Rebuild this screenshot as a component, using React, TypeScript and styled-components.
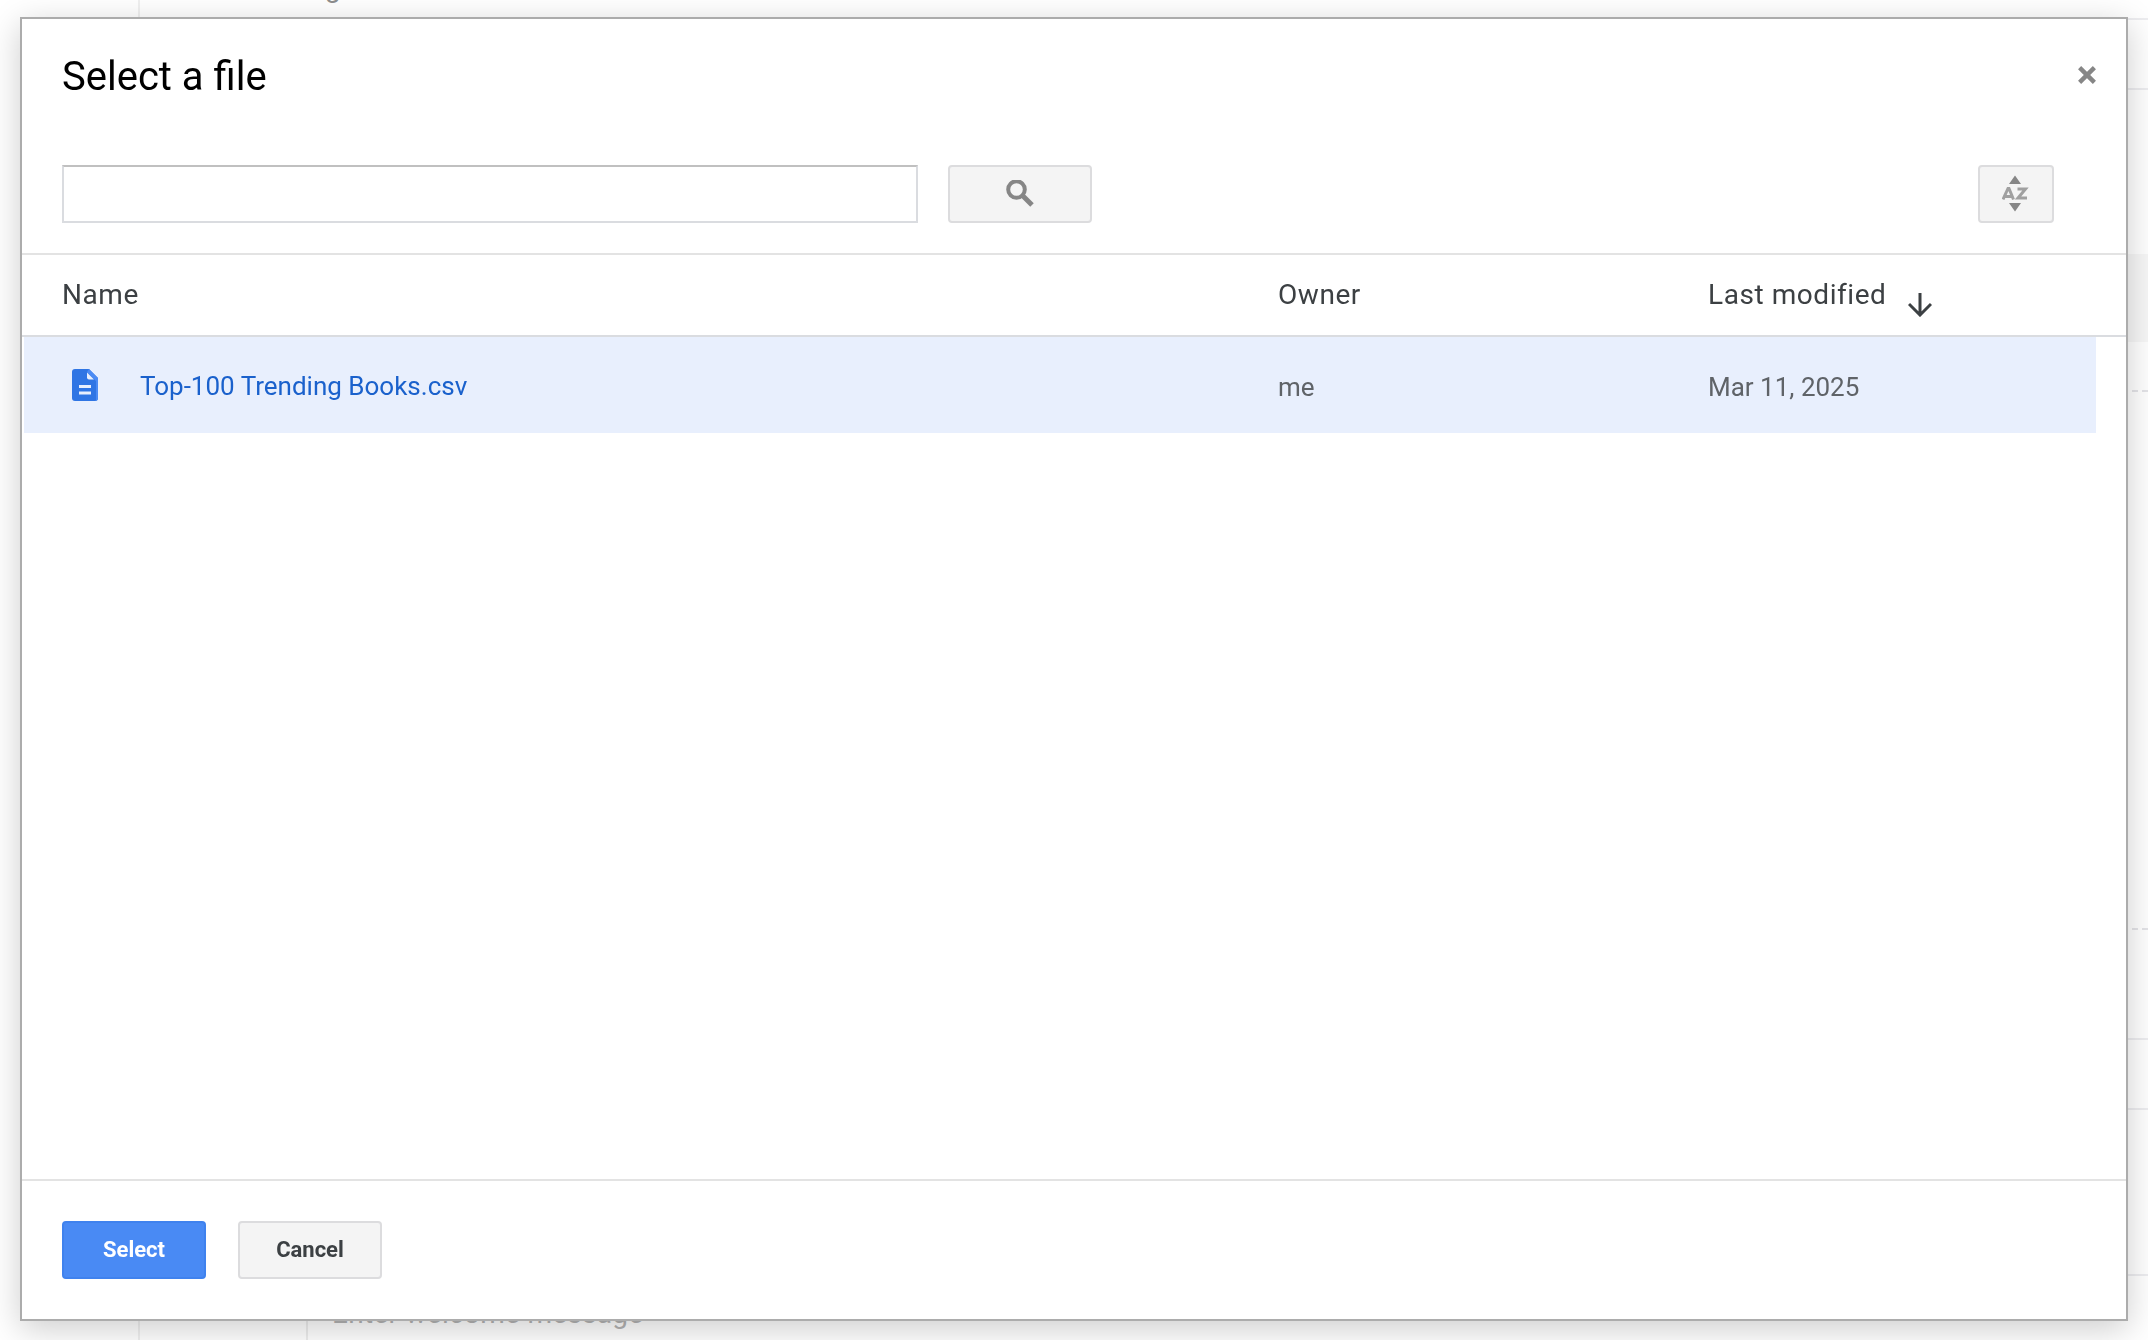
import React from "react";
import styled, { createGlobalStyle } from "styled-components";

const GlobalStyle = createGlobalStyle`
  *, *::before, *::after { box-sizing: border-box; }
  html, body, #root { height: 100%; }
  body {
    margin: 0;
    overflow: hidden;
    background: #fff;
    color: #3c4043;
    font-family: Roboto, "Liberation Sans", sans-serif;
  }
`;

const Page = styled.div`
  display: grid;
  grid-template-columns: 140px 1fr;
  height: 100%;
  overflow: hidden;
  color: #8e8e8e;
  font-size: 28px;
  line-height: 32px;
`;

const Rail = styled.div`
  border-right: 2px solid #f0f0f0;
`;

const Sheet = styled.div`
  display: flex;
  flex-direction: column;
`;

const Band = styled.div<{ $height: number; $line?: "solid" | "dashed"; $shade?: boolean }>`
  flex: none;
  height: ${(p) => p.$height}px;
  border-bottom: ${(p) => (p.$line ? `2px ${p.$line} ${p.$line === "dashed" ? "#e4e4e8" : "#ededf0"}` : "none")};
  background: ${(p) => (p.$shade ? "#f7f7f7" : "transparent")};
`;

const Heading = styled.div`
  margin-top: -28px;
  padding-left: 185px;
`;

const MessageRow = styled.div`
  flex: 1;
  display: flex;
  padding-left: 166px;
`;

const MessageField = styled.div`
  flex: 1;
  padding: 22px 0 0 24px;
  border-left: 2px solid #ededed;
  color: #b4b4b4;
  letter-spacing: 0.01em;
  white-space: nowrap;
`;

const Dialog = styled.div`
  position: fixed;
  inset: 17px 20px 19px;
  display: flex;
  flex-direction: column;
  background: #fff;
  border: 2px solid #acacac;
  box-shadow: 0 8px 32px rgba(0, 0, 0, 0.2);
`;

const Header = styled.header`
  display: flex;
  justify-content: space-between;
  align-items: flex-start;
  height: 114px;
  padding: 34px 20px 0 40px;
`;

const Title = styled.h1`
  margin: 0;
  color: #000;
  font-size: 40px;
  font-weight: 400;
  line-height: 48px;
`;

const CloseButton = styled.button`
  display: grid;
  place-items: center;
  width: 38px;
  height: 44px;
  padding: 0;
  border: 0;
  background: none;
  color: #868686;
`;

const Toolbar = styled.form`
  display: flex;
  align-items: center;
  gap: 30px;
  padding: 32px 72px 30px 40px;
  border-bottom: 2px solid #e3e3e3;
`;

const SearchInput = styled.input`
  flex: 0 1 856px;
  min-width: 0;
  height: 58px;
  padding: 0 16px;
  border: 2px solid #dadce0;
  border-top-color: #c0c0c0;
  font: 26px Roboto, "Liberation Sans", sans-serif;
  outline: none;
`;

const Button = styled.button<{ $primary?: boolean; $compact?: boolean }>`
  display: flex;
  justify-content: center;
  align-items: center;
  width: ${(p) => (p.$compact ? 76 : 144)}px;
  height: 58px;
  margin-left: ${(p) => (p.$compact ? "auto" : "0")};
  padding: 0;
  border: 2px solid ${(p) => (p.$primary ? "#3f82ee" : "#dcdcde")};
  border-radius: 4px;
  background: ${(p) => (p.$primary ? "#498af4" : "#f4f4f4")};
  color: ${(p) => (p.$primary ? "#fff" : "#3c4043")};
  font: 700 22px/26px Roboto, "Liberation Sans", sans-serif;
`;

const FileArea = styled.main`
  flex: 1;
  min-height: 0;
  overflow: hidden;
`;

const FileTable = styled.table`
  width: 100%;
  table-layout: fixed;
  border-collapse: separate;
  border-spacing: 0;
  text-align: left;
`;

const Column = styled.col<{ $width?: number }>`
  width: ${(p) => (p.$width ? `${p.$width}px` : "auto")};
`;

const HeadCell = styled.th<{ $first?: boolean }>`
  height: 82px;
  padding: 0 0 0 ${(p) => (p.$first ? 40 : 0)}px;
  border-bottom: 2px solid #dadce0;
  font-size: 28px;
  font-weight: 400;
  line-height: 32px;
  letter-spacing: 0.02em;
  white-space: nowrap;
`;

const SortLabel = styled.span`
  display: flex;
  align-items: flex-end;
  gap: 22px;
  height: 32px;

  svg {
    margin-bottom: -6px;
  }
`;

const Cell = styled.td<{ $first?: boolean }>`
  height: 96px;
  padding: ${(p) => (p.$first ? 2 : 4)}px 0 0;
  border-left: ${(p) => (p.$first ? "2px solid #fff" : "0")};
  background: #e8effd;
  color: #5f6368;
  font-size: 26px;
  line-height: 32px;
  white-space: nowrap;
`;

const FileName = styled.div`
  display: flex;
  align-items: center;
  gap: 42px;
  padding-left: 48px;
  color: #1a61cc;

  svg {
    margin-bottom: 2px;
  }
`;

const Footer = styled.footer`
  display: flex;
  gap: 32px;
  padding: 40px;
  border-top: 2px solid #e3e3e3;
`;

const CloseIcon = () => (
  <svg width="18" height="18" viewBox="0 0 18 18" aria-hidden="true">
    <path d="M1.6 1.6l14.8 14.8M16.4 1.6L1.6 16.4" stroke="currentColor" strokeWidth="4.4" />
  </svg>
);

const SearchIcon = () => (
  <svg width="28" height="28" viewBox="0 1 28 28" fill="none" stroke="#868686" aria-hidden="true">
    <circle cx="10.5" cy="10.5" r="8.3" strokeWidth="4" />
    <path d="M17 17l9 9" strokeWidth="5" />
  </svg>
);

const SortIcon = () => (
  <svg width="28" height="38" viewBox="0 0 28 38" aria-hidden="true">
    <path d="M13 .5l6 8.5H7zM13 36.5l6-8.5H7z" fill="#868686" />
    <g fill="none" stroke="#a0a0a0" strokeWidth="3">
      <path d="M1 24.5L6 13.5H7L11.5 24.5M3 21.5h7" />
      <path d="M15.5 14h8L16 23h9" />
    </g>
  </svg>
);

const ArrowIcon = () => (
  <svg width="24" height="24" viewBox="0 0 24 24" fill="none" stroke="#3c4043" strokeWidth="3" aria-hidden="true">
    <path d="M12 0v22M1 11l11 11 11-11" />
  </svg>
);

const DocumentIcon = () => (
  <svg width="26" height="32" viewBox="0 0 26 32" aria-hidden="true">
    <path d="M3 0h14l9 9v20a3 3 0 0 1-3 3H3a3 3 0 0 1-3-3V3a3 3 0 0 1 3-3z" fill="#2f75e4" />
    <path d="M17 0l9 9v20a3 3 0 0 1-2 3V12L15 3z" fill="#4b8bf4" />
    <path d="M15 3.5v5a2 2 0 0 0 2 2h5z" fill="#e8effd" />
    <path d="M7 17.5h12M7 24h12" stroke="#e8effd" strokeWidth="3" />
  </svg>
);

export default function App() {
  return (
    <>
      <GlobalStyle />
      <Page aria-hidden="true">
        <Rail />
        <Sheet>
          <Heading>g</Heading>
          <Band $height={16} $line="solid" />
          <Band $height={70} $line="solid" />
          <Band $height={164} />
          <Band $height={88} $shade />
          <Band $height={50} $line="dashed" />
          <Band $height={538} $line="dashed" />
          <Band $height={110} $line="solid" />
          <Band $height={70} $line="solid" />
          <Band $height={166} $line="solid" />
          <MessageRow>
            <MessageField>Enter welcome message</MessageField>
          </MessageRow>
        </Sheet>
      </Page>
      <Dialog role="dialog" aria-labelledby="dialog-title">
        <Header>
          <Title id="dialog-title">Select a file</Title>
          <CloseButton type="button" aria-label="Close">
            <CloseIcon />
          </CloseButton>
        </Header>
        <Toolbar onSubmit={(event) => event.preventDefault()}>
          <SearchInput type="text" aria-label="Search files" />
          <Button type="submit" aria-label="Search">
            <SearchIcon />
          </Button>
          <Button type="button" $compact aria-label="Sort options">
            <SortIcon />
          </Button>
        </Toolbar>
        <FileArea>
          <FileTable>
            <colgroup>
              <Column />
              <Column $width={430} />
              <Column $width={388} />
              <Column $width={30} />
            </colgroup>
            <thead>
              <tr>
                <HeadCell $first scope="col">Name</HeadCell>
                <HeadCell scope="col">Owner</HeadCell>
                <HeadCell scope="col">
                  <SortLabel>
                    Last modified
                    <ArrowIcon />
                  </SortLabel>
                </HeadCell>
                <HeadCell as="td" />
              </tr>
            </thead>
            <tbody>
              <tr>
                <Cell $first>
                  <FileName>
                    <DocumentIcon />
                    Top-100 Trending Books.csv
                  </FileName>
                </Cell>
                <Cell>me</Cell>
                <Cell>Mar 11, 2025</Cell>
              </tr>
            </tbody>
          </FileTable>
        </FileArea>
        <Footer>
          <Button type="button" $primary>Select</Button>
          <Button type="button">Cancel</Button>
        </Footer>
      </Dialog>
    </>
  );
}
